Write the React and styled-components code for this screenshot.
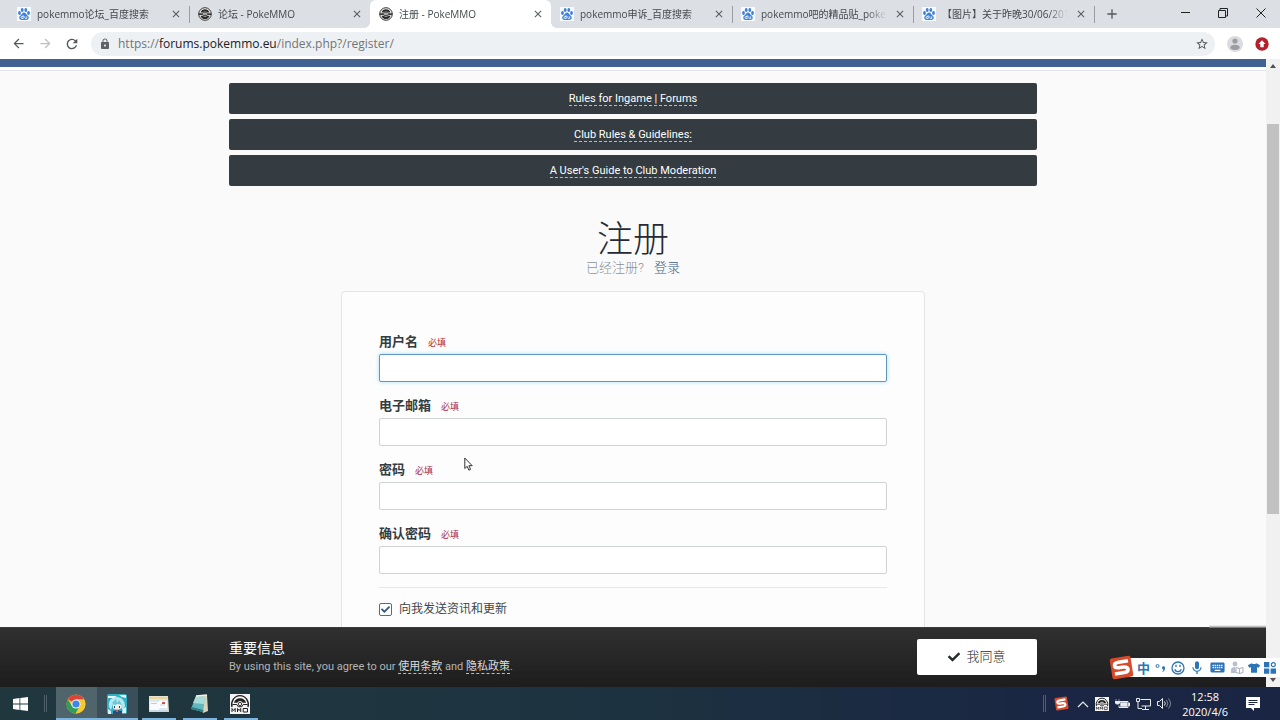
import React from 'react'
import styled, { createGlobalStyle, css } from 'styled-components'
import {
  MdAdd,
  MdArrowBack,
  MdArrowForward,
  MdClose,
  MdKeyboard,
  MdLock,
  MdMic,
  MdRefresh,
  MdStarBorder
} from 'react-icons/md'
import { FaCheck, FaTshirt } from 'react-icons/fa'

const uiFont = `'Open Sans', 'Noto Sans CJK SC', sans-serif`
const siteFont = `Roboto, 'Noto Sans CJK SC', sans-serif`

const GlobalStyle = createGlobalStyle`
  * {
    box-sizing: border-box;
  }

  body {
    margin: 0;
    overflow: hidden;
  }

  button {
    background: none;
    border: 0;
    font: inherit;
    margin: 0;
    padding: 0;
  }

  svg {
    display: block;
    flex: none;
  }
`

const Desktop = styled.div`
  display: flex;
  flex-direction: column;
  font-family: ${uiFont};
  height: 100vh;
  position: relative;
`

/* browser chrome */

const TabStrip = styled.div`
  align-items: stretch;
  background: #dce0e5;
  display: flex;
  height: 28px;
  padding-left: 8px;
`

const Tab = styled.div`
  align-items: center;
  color: #45494d;
  display: flex;
  flex: 0 1 181px;
  gap: 6px;
  min-width: 0;
  padding: 0 6px 0 9px;
  position: relative;

  ${props => props.$divider && css`
    &::after {
      background: #9a9ea3;
      content: '';
      height: 17px;
      position: absolute;
      right: -1px;
      top: 6px;
      width: 1px;
    }
  `}

  ${props => props.$active && css`
    background: #fff;
    border-radius: 6px 6px 0 0;

    &::before,
    &::after {
      bottom: 0;
      content: '';
      height: 6px;
      position: absolute;
      width: 6px;
    }

    &::before {
      background: radial-gradient(circle at 0 0, transparent 6px, #fff 6px);
      left: -6px;
    }

    &::after {
      background: radial-gradient(circle at 100% 0, transparent 6px, #fff 6px);
      right: -6px;
    }
  `}
`

const TabTitle = styled.span`
  flex: 1;
  font-size: 10px;
  line-height: 16px;
  mask-image: linear-gradient(to left, transparent, #000 20px);
  min-width: 0;
  overflow: hidden;
  white-space: nowrap;
`

const IconButton = styled.button`
  align-items: center;
  color: ${props => props.$color || '#55595d'};
  display: flex;
  flex: none;
  height: ${props => props.$size || 14}px;
  justify-content: center;
  width: ${props => props.$size || 14}px;
`

const NewTab = styled(IconButton)`
  align-self: center;
  margin-left: 9px;
`

const WindowControls = styled.div`
  display: flex;
  margin-left: auto;
`

const WindowButton = styled.button`
  align-items: center;
  color: #222;
  display: flex;
  height: 25px;
  justify-content: center;
  width: 38px;
`

const Toolbar = styled.div`
  align-items: center;
  background: #fff;
  display: flex;
  gap: 11px;
  height: 31px;
  padding: 0 10px;
`

const AddressBar = styled.div`
  align-items: center;
  background: #eef1f3;
  border-radius: 12px;
  color: #5f6368;
  display: flex;
  flex: 1;
  gap: 7px;
  height: 24px;
  padding: 0 6px 0 8px;
`

const Address = styled.input`
  background: none;
  border: 0;
  color: transparent;
  flex: 1;
  font: inherit;
  grid-area: 1 / 1;
  outline: 0;
  padding: 0;
  width: 100%;
`

const AddressText = styled.label`
  display: grid;
  flex: 1;
  font-size: 12px;
  line-height: 18px;
`

const AddressHost = styled.span`
  color: #70757a;
  grid-area: 1 / 1;
  pointer-events: none;

  b {
    color: #202124;
    font-weight: 400;
  }
`

const ToolbarEnd = styled.div`
  align-items: center;
  display: flex;
  gap: 10px;
`

const Viewport = styled.div`
  display: flex;
  flex: 1;
  min-height: 0;
`

const Scrollbar = styled.div`
  align-items: stretch;
  background: #f1f1f1;
  display: flex;
  flex: none;
  flex-direction: column;
  padding: 0 1px;
  width: 14px;
`

const ScrollArrow = styled.div`
  align-items: center;
  display: flex;
  height: 14px;
  justify-content: center;
`

const ScrollSpace = styled.div`
  background: ${props => props.$thumb ? '#c1c1c1' : 'none'};
  flex: ${props => props.$size};
`

/* forum page */

const Page = styled.div`
  background: #fafafa;
  color: #272a34;
  display: flex;
  flex: 1;
  flex-direction: column;
  font-family: ${siteFont};
  min-width: 0;
`

const HeaderEdge = styled.header`
  background: #fff;
  border-bottom: 1px solid #e3e3e5;
  border-top: 8px solid #3f6292;
  flex: none;
  height: 12px;
`

const Content = styled.main`
  flex: 1;
  min-height: 0;
  overflow: hidden;
  padding: 12px 20px 0;
`

const Notices = styled.nav`
  display: flex;
  flex-direction: column;
  gap: 5px;
  margin: 0 auto;
  max-width: 808px;
`

const Notice = styled.div`
  background: #353c41;
  border-radius: 2px;
  font-size: 11px;
  line-height: 13px;
  padding: 9px;
  text-align: center;
`

const DashedLink = styled.a`
  border-bottom: 1px dashed #b9bcbe;
  color: #fff;
  text-decoration: none;
`

const TitleBlock = styled.div`
  margin-top: 34px;
  text-align: center;
`

const Title = styled.h1`
  font-size: 36px;
  font-weight: 300;
  line-height: 40px;
  margin: 0;
`

const SubTitle = styled.p`
  color: #8c9299;
  font-size: 13px;
  font-weight: 300;
  line-height: 16px;
  margin: 0;

  a {
    color: #3d5f8c;
    margin-left: 7px;
    text-decoration: none;
  }
`

const Card = styled.form`
  background: #fdfdfd;
  border: 1px solid #e4e5e7;
  border-radius: 4px;
  margin: 15px auto 0;
  max-width: 584px;
  padding: 39px 37px;
`

const Field = styled.div`
  margin-bottom: 13px;
`

const FieldLabel = styled.label`
  align-items: baseline;
  color: #353c41;
  display: flex;
  font-size: 13px;
  font-weight: 700;
  gap: 10px;
  line-height: 22px;
  margin-bottom: 1px;
`

const Required = styled.span`
  color: #b02a37;
  font-size: 9px;
  font-weight: 400;
  line-height: 16px;
`

const TextInput = styled.input`
  background: #fff;
  border: 1px solid ${props => props.$active ? '#5f97bd' : '#cfd1d3'};
  border-radius: 2px;
  box-shadow: ${props => props.$active ? '0 0 4px #a5dcf5' : 'none'};
  display: block;
  font: 12px/16px ${siteFont};
  height: 28px;
  outline: 0;
  padding: 5px 8px;
  width: 100%;
`

const Newsletter = styled.label`
  align-items: center;
  border-top: 1px solid #e8e8ea;
  color: #40454a;
  display: flex;
  font-size: 12px;
  gap: 7px;
  line-height: 18px;
  padding-top: 12px;
`

const Tick = styled.span`
  display: grid;
  height: 13px;
  place-items: center;
  width: 13px;

  input {
    appearance: none;
    background: #fff;
    border: 1px solid #4a6f96;
    border-radius: 2px;
    grid-area: 1 / 1;
    height: 13px;
    margin: 0;
    width: 13px;
  }

  svg {
    color: #2f5583;
    grid-area: 1 / 1;
    pointer-events: none;
    z-index: 1;
  }
`

const Terms = styled.footer`
  background: linear-gradient(#303030, #1d1d1d);
  border-top: 1px solid #3a3a3a;
  flex: none;
  padding: 11px 20px 12px;
  position: relative;

  &::before {
    background: linear-gradient(transparent, #888);
    content: '';
    height: 3px;
    position: absolute;
    right: 0;
    top: -3px;
    width: 57px;
  }
`

const TermsInner = styled.div`
  align-items: center;
  display: flex;
  justify-content: space-between;
  margin: 0 auto;
  max-width: 808px;
`

const TermsTitle = styled.h2`
  color: #fff;
  font-size: 14px;
  font-weight: 400;
  line-height: 19px;
  margin: 0;
`

const TermsText = styled.p`
  color: #b4b4b4;
  font-size: 11px;
  line-height: 17px;
  margin: 0;

  a {
    color: #dcdcdc;
  }
`

const AgreeButton = styled.button`
  align-items: center;
  background: #fff;
  border-radius: 2px;
  color: #272a2d;
  display: flex;
  font-size: 13px;
  font-weight: 300;
  gap: 6px;
  height: 36px;
  justify-content: center;
  line-height: 16px;
  width: 120px;
`

/* windows desktop */

const Taskbar = styled.div`
  align-items: stretch;
  background: linear-gradient(to right, #21373e, #1d3340 45%, #1a2743 80%, #1a2544);
  display: flex;
  flex: none;
  height: 33px;
`

const StartButton = styled.button`
  align-items: center;
  display: flex;
  justify-content: center;
  width: 40px;
`

const Grip = styled.span`
  align-self: center;
  border: solid #4d5f68;
  border-width: 0 1px;
  height: 17px;
  margin: 0 ${props => props.$gap}px 0 4px;
  width: 3px;
`

const Apps = styled.div`
  display: flex;
`

const AppButton = styled.button`
  align-items: center;
  background: ${props => props.$fill || 'none'};
  border-bottom: 2px solid ${props => props.$fill ? '#7db4e0' : 'transparent'};
  display: flex;
  justify-content: center;
  padding: 2px 1px 0 0;
  position: relative;
  width: 41px;

  &::after {
    background: #7db4e0;
    bottom: -2px;
    content: '';
    height: 2px;
    left: 4px;
    position: absolute;
    right: 3px;
  }
`

const Tray = styled.div`
  align-items: center;
  color: #e8ecef;
  display: flex;
  gap: 6px;
  margin-left: auto;
  padding-right: 20px;
`

const Clock = styled.time`
  color: #fff;
  font-size: 11px;
  line-height: 15px;
  margin: 0 12px 0 4px;
  text-align: center;
`

const ImeBar = styled.div`
  align-items: center;
  background: #fff;
  bottom: 43px;
  color: #2c74b8;
  display: flex;
  height: 19px;
  justify-content: space-between;
  padding: 0 4px 0 13px;
  position: absolute;
  right: 0;
  width: 156px;
`

const ImeLogo = styled.div`
  left: -15px;
  position: absolute;
  top: -3px;
`

const ImeMode = styled.span`
  font-size: 13px;
  font-weight: 700;
  line-height: 18px;
  width: 13px;
`

const Pointer = styled.div`
  left: 464px;
  pointer-events: none;
  position: absolute;
  top: 457px;
`

const BaiduIcon = () => (
  <svg width="14" height="14" viewBox="0 0 14 14">
    <rect width="14" height="14" fill="#f7fbff" />
    <g fill="#3d80d6">
      <ellipse cx="2.5" cy="6" rx="1.4" ry="1.9" />
      <ellipse cx="5.2" cy="3" rx="1.4" ry="1.9" />
      <ellipse cx="8.8" cy="3" rx="1.4" ry="1.9" />
      <ellipse cx="11.5" cy="6" rx="1.4" ry="1.9" />
      <path d="M7 5.600c1.600 0 2 1.500 3 2.500 1 .9 1.900 1.700 1.700 3-.2 1.600-1.400 2-2.700 1.900-1.400-.1-2.600-.1-4 0-1.300.1-2.500-.3-2.700-1.900-.2-1.300.7-2.100 1.700-3 1-1 1.400-2.500 3-2.500z" />
    </g>
    <path d="M6.200 8.200v3.300H5a1 1 0 1 1 0-2h1.200M7.800 9.300v1.500c0 .5.300.8.700.8h1.200V9.300" fill="none" stroke="#fff" strokeWidth=".8" />
  </svg>
)

const PokeIcon = () => (
  <svg width="14" height="14" viewBox="0 0 14 14">
    <circle cx="7" cy="7" r="6.300" fill="#f2f2f2" stroke="#333" strokeWidth="1" />
    <path d="M2.500 5.500a4.700 4.700 0 0 1 9 0H9L8.200 4.800H5.800L5 5.500zM2.500 8.700a4.700 4.700 0 0 0 9 0H9l-.8.700H5.800L5 8.700z" fill="#2c2c2c" />
    <path d="M.8 6.200h3.600l1-.9h3.200l1 .9h3.600v1.800H9.600l-1 .9H5.400l-1-.9H.8z" fill="#383838" />
    <path d="M5.200 6.500h3.600v1.200H5.200z" fill="none" stroke="#e4e4e4" strokeWidth=".7" />
  </svg>
)

const PokeTile = ({ size }) => (
  <svg width={ size } height={ size } viewBox="0 0 20 20">
    <rect width="20" height="20" fill="#f4f4f4" />
    <path d="M2 13a8.300 9 0 1 1 16 0" fill="none" stroke="#222" strokeWidth="1.400" />
    <path d="M4 8.800a6.200 6.200 0 0 1 12 0h-3.300a2.900 2.900 0 0 0-5.400 0z" fill="#222" />
    <circle cx="10" cy="10" r="1.700" fill="none" stroke="#222" strokeWidth=".9" />
    <path d="M2.500 10.500h4.300l1.400 2.200h3.600l1.400-2.200h4.300" fill="none" stroke="#222" />
    <path d="M2 18v-3.500l1.600 2 1.600-2V18M7.500 18v-3.500l1.600 2 1.600-2V18M13.200 14.500h4.300V18h-4.300z" fill="none" stroke="#222" strokeWidth="1" />
  </svg>
)

const ChromeIcon = () => (
  <svg width="20" height="20" viewBox="0 0 20 20">
    <circle cx="10" cy="10" r="9.500" fill="#f6c834" />
    <path d="M10 10 1.800 5.200A9.500 9.500 0 0 1 18.200 5.500H10z" fill="#dc4437" />
    <path d="M1.800 5.200A9.500 9.500 0 0 0 9.600 19.500L14 12 10 10 6 12.200z" fill="#2f9e57" />
    <path d="M10 5.500h8.200a9.500 9.500 0 0 1-8.600 14L14 12z" fill="#f6c834" />
    <circle cx="10" cy="10" r="4.600" fill="#f5f5f5" />
    <circle cx="10" cy="10" r="3.600" fill="#4285e8" />
  </svg>
)

const CharacterIcon = () => (
  <svg width="20" height="20" viewBox="0 0 20 20">
    <rect width="20" height="20" rx="2" fill="#33afc5" />
    <path d="M2 13C1 6 5 3 10 3s8 4 8 9l-2 5-3-6-7-1-2 6z" fill="#b2e9ef" />
    <path d="M1 2h9l-3 2H1zM12 1h7v3l-4-1z" fill="#e9fafa" />
    <path d="M6 11c2-2 6-2 8 0v3c-1 2-7 2-8 0z" fill="#f6eeee" />
    <path d="M5 9l4-4 1 4 2-3 3 5-4-1-3 1z" fill="#69c8d7" />
    <path d="M7 12h1v2H7zM12 12h1v2h-1z" fill="#24475f" />
    <path d="M6 17l4-1 5 1v3H6z" fill="#294c79" />
    <path d="M1 15l3 2v3H1zM16 15l3-2v6h-4z" fill="#d9f5f7" />
    <path d="M9 16h2v2H9z" fill="#d0536f" />
  </svg>
)

const MailIcon = () => (
  <svg width="21" height="18" viewBox="0 0 21 18">
    <path d="M1 1h19l1 16H1z" fill="#e9e3cb" />
    <path d="M1 3h19v13H1z" fill="#dce9f4" />
    <path d="M1 2h19v2H1z" fill="#ecd59a" />
    <path d="M2 7h9v8H2z" fill="#f8fafc" />
    <path d="M11 6h8v7h-8z" fill="#fff" />
    <path d="M14 7h3v2h-3z" fill="#d9503d" />
    <path d="M12 10h5M3 8.500h6" stroke="#a9c3d8" strokeWidth=".8" />
    <path d="M1 16h20" stroke="#b9c9d8" />
  </svg>
)

const NotepadIcon = () => (
  <svg width="19" height="20" viewBox="0 0 19 20">
    <path d="M6 2 17 1l1 16-5 2z" fill="#d9d5bd" />
    <path d="M6 2l9 1-2 15-12-3z" fill="#61b7bd" />
    <path d="M6 2l9 1-1 7-11-1z" fill="#a5dcda" />
    <path d="M1 15l12 3 .5-2L2 13z" fill="#2f7f88" />
    <path d="M6 2l11-1" stroke="#f2f2ea" strokeWidth="1.500" />
  </svg>
)

const SogouIcon = ({ size }) => (
  <svg width={ size } height={ size } viewBox="0 0 25 25">
    <g transform="rotate(-9 12.500 12.500)">
      <rect x="2" y="2" width="21" height="21" rx="2" fill="#d94a2b" />
      <path d="M20 6.800h-9.500c-6 0-6 5.200-.5 5.500h4.500c5.500.3 5.500 5.500 0 5.500H5" fill="none" stroke="#fff" strokeWidth="3.600" />
    </g>
  </svg>
)

const WindowsIcon = () => (
  <svg width="15" height="14" viewBox="0 0 15 14" fill="#fff">
    <path d="M0 2l6.500-1v5.600H0zM7.300.9 15 0v6.600H7.300zM0 7.400h6.500V13L0 12zM7.300 7.400H15V14l-7.700-1z" />
  </svg>
)

const ProfileIcon = () => (
  <svg width="16" height="16" viewBox="0 0 16 16">
    <circle cx="8" cy="8" r="8" fill="#dadcdf" />
    <circle cx="8" cy="5" r="2.600" fill="#9b9da0" />
    <ellipse cx="8" cy="11.300" rx="4.600" ry="2.600" fill="#9b9da0" />
  </svg>
)

const UpdateIcon = () => (
  <svg width="14" height="14" viewBox="0 0 14 14">
    <circle cx="7" cy="7" r="6.700" fill="#b3202c" />
    <path d="M7 3.300 10.500 7H8.700v3.300H5.300V7H3.500z" fill="#fff" />
  </svg>
)

const ArrowGlyph = ({ down }) => (
  <svg width="6" height="4" viewBox="0 0 6 4">
    <path d={ down ? 'M0 0h6L3 4z' : 'M0 4h6L3 0z' } fill="#505050" />
  </svg>
)

const BatteryIcon = () => (
  <svg width="15" height="12" viewBox="0 0 15 12">
    <path d="M4.500 3.500h8.500v6h-9v-2" fill="none" stroke="currentColor" />
    <path d="M5.500 4.500H12v4H5.500zM13.500 5H15v3h-1.500zM1 1v2M4 1v2" fill="currentColor" stroke="currentColor" strokeWidth=".5" />
    <path d="M0 3h5v1.500a2 2 0 0 1-2 2H2a2 2 0 0 1-2-2z" fill="currentColor" />
  </svg>
)

const NetworkIcon = () => (
  <svg width="15" height="13" viewBox="0 0 15 13" fill="none" stroke="currentColor">
    <path d="M4.500 2.500h10v6.500h-9M9.500 9v3M6 12.500h7M.5 1.500h3v3h-3zM2 4.500v7h4" />
  </svg>
)

const SpeakerIcon = () => (
  <svg width="15" height="13" viewBox="0 0 15 13" fill="none" stroke="currentColor">
    <path d="M.5 4.500h2l3-3v10l-3-3h-2z" />
    <path d="M7.500 4.500q1.500 2 0 4" />
    <path d="M9.500 3q2.500 3.500 0 7M11.500 1.500q4 5 0 10" opacity=".5" />
  </svg>
)

const NoteIcon = () => (
  <svg width="14" height="14" viewBox="0 0 14 14">
    <path d="M0 0h14v11H8v3l-3-3H0z" fill="#fff" />
    <path d="M2.500 3.500h9M2.500 5.500h9M2.500 7.500h6" stroke="#1a2544" />
  </svg>
)

const PunctuationIcon = () => (
  <svg width="13" height="12" viewBox="0 0 13 12">
    <circle cx="3.500" cy="4" r="1.500" fill="none" stroke="currentColor" />
    <path d="M8 5.500a1.500 1.500 0 1 1 3 .5c0 2-.8 3.200-2.300 4l-.4-.7c.8-.5 1-1.200 1-1.900C8.500 7.300 8 6.500 8 5.500z" fill="currentColor" />
  </svg>
)

const SmileIcon = () => (
  <svg width="14" height="14" viewBox="0 0 14 14" fill="none" stroke="currentColor" strokeWidth="1.300">
    <circle cx="7" cy="7" r="6" />
    <path d="M5 3.800v2.200M9 3.800v2.200M3.800 8.200c1 3.200 5.400 3.200 6.400 0" />
  </svg>
)

const ReaderIcon = () => (
  <svg width="14" height="13" viewBox="0 0 14 13">
    <circle cx="5" cy="3" r="2.400" fill="#b9bdd0" />
    <path d="M1 12V9c0-2 1.500-3 4-3l1 6zM0 12h6" fill="#b9bdd0" />
    <path d="M6 6.500l3.500 1 3.500-1v5l-3.500 1-3.500-1zM9.500 7.500v5" fill="#fff" stroke="#a9aec0" />
  </svg>
)

const GridIcon = () => (
  <svg width="12" height="12" viewBox="0 0 12 12" fill="currentColor">
    <path d="M0 0h5.300v5.300H0zM0 6.500h5.300v5.300H0zM6.600 6.500H12v5.300H6.600z" />
    <circle cx="9.300" cy="2.700" r="2" fill="none" stroke="currentColor" strokeWidth="1.200" />
  </svg>
)

const tabs = [
  { title: 'pokemmo论坛_百度搜索', icon: BaiduIcon, divider: true },
  { title: '论坛 - PokeMMO', icon: PokeIcon },
  { title: '注册 - PokeMMO', icon: PokeIcon, active: true },
  { title: 'pokemmo申诉_百度搜索', icon: BaiduIcon, divider: true },
  { title: 'pokemmo吧的精品贴_poke', icon: BaiduIcon, divider: true },
  { title: '【图片】关于昨晚30/06/201', icon: BaiduIcon, divider: true }
]

const notices = [
  'Rules for Ingame | Forums',
  'Club Rules & Guidelines:',
  'A User\'s Guide to Club Moderation'
]

const fields = [
  { id: 'username', label: '用户名', type: 'text', active: true },
  { id: 'email', label: '电子邮箱', type: 'email' },
  { id: 'password', label: '密码', type: 'password' },
  { id: 'password-confirm', label: '确认密码', type: 'password' }
]

const apps = [
  { name: 'Chrome', icon: <ChromeIcon />, fill: '#50646b' },
  { name: 'Game', icon: <CharacterIcon />, fill: '#3b4f5b' },
  { name: 'Mail', icon: <MailIcon /> },
  { name: 'Notepad', icon: <NotepadIcon /> },
  { name: 'PokeMMO', icon: <PokeTile size={ 20 } /> }
]

function Browser () {
  return (
    <>
      <TabStrip>
        {
          tabs.map(({ title, icon: Icon, active, divider }) => (
            <Tab key={ title } $active={ active } $divider={ divider }>
              <Icon />
              <TabTitle>{ title }</TabTitle>
              <IconButton aria-label="Close tab"><MdClose size={ 12 } /></IconButton>
            </Tab>
          ))
        }
        <NewTab aria-label="New tab" $size={ 18 }><MdAdd size={ 16 } /></NewTab>
        <WindowControls>
          <WindowButton aria-label="Minimize">
            <svg width="10" height="10"><path d="M1 4.500h9" stroke="currentColor" /></svg>
          </WindowButton>
          <WindowButton aria-label="Restore">
            <svg width="10" height="10" fill="none" stroke="currentColor">
              <path d="M.5 2.500h7v7h-7zM2 2V.5h7.500V8H8" />
            </svg>
          </WindowButton>
          <WindowButton aria-label="Close">
            <svg width="10" height="10"><path d="M.5.5l9 9M9.500.5l-9 9" stroke="currentColor" /></svg>
          </WindowButton>
        </WindowControls>
      </TabStrip>
      <Toolbar>
        <IconButton aria-label="Back" $size={ 16 }><MdArrowBack size={ 15 } /></IconButton>
        <IconButton aria-label="Forward" $size={ 16 } $color="#bcbfc2"><MdArrowForward size={ 15 } /></IconButton>
        <IconButton aria-label="Reload" $size={ 16 }><MdRefresh size={ 16 } /></IconButton>
        <AddressBar>
          <MdLock size={ 12 } />
          <AddressText>
            <Address aria-label="Address" type="url" />
            <AddressHost>https://<b>forums.pokemmo.eu</b>/index.php?/register/</AddressHost>
          </AddressText>
          <IconButton aria-label="Bookmark"><MdStarBorder size={ 14 } /></IconButton>
        </AddressBar>
        <ToolbarEnd>
          <IconButton aria-label="Profile" $size={ 18 }><ProfileIcon /></IconButton>
          <IconButton aria-label="Update" $size={ 16 }><UpdateIcon /></IconButton>
        </ToolbarEnd>
      </Toolbar>
    </>
  )
}

function Register () {
  return (
    <Page>
      <HeaderEdge />
      <Content>
        <Notices>
          {
            notices.map(text => (
              <Notice key={ text }><DashedLink href="#">{ text }</DashedLink></Notice>
            ))
          }
        </Notices>
        <TitleBlock>
          <Title>注册</Title>
          <SubTitle>已经注册? <a href="#">登录</a></SubTitle>
        </TitleBlock>
        <Card>
          {
            fields.map(field => (
              <Field key={ field.id }>
                <FieldLabel htmlFor={ field.id }>
                  { field.label }
                  <Required>必填</Required>
                </FieldLabel>
                <TextInput id={ field.id } type={ field.type } $active={ field.active } />
              </Field>
            ))
          }
          <Newsletter>
            <Tick>
              <input type="checkbox" defaultChecked />
              <FaCheck size={ 9 } />
            </Tick>
            向我发送资讯和更新
          </Newsletter>
        </Card>
      </Content>
      <Terms>
        <TermsInner>
          <div>
            <TermsTitle>重要信息</TermsTitle>
            <TermsText>
              By using this site, you agree to our <DashedLink href="#">使用条款</DashedLink> and <DashedLink href="#">隐私政策</DashedLink>.
            </TermsText>
          </div>
          <AgreeButton><FaCheck size={ 12 } />我同意</AgreeButton>
        </TermsInner>
      </Terms>
    </Page>
  )
}

function WindowsTaskbar () {
  return (
    <Taskbar>
      <StartButton aria-label="Start"><WindowsIcon /></StartButton>
      <Grip $gap={ 9 } />
      <Apps>
        {
          apps.map(app => (
            <AppButton key={ app.name } aria-label={ app.name } $fill={ app.fill }>{ app.icon }</AppButton>
          ))
        }
      </Apps>
      <Tray>
        <Grip $gap={ 2 } />
        <SogouIcon size={ 15 } />
        <svg width="14" height="8" viewBox="0 0 14 8" fill="none" stroke="currentColor" strokeWidth="1.200">
          <path d="M3 7l5-5 5 5" />
        </svg>
        <PokeTile size={ 14 } />
        <BatteryIcon />
        <NetworkIcon />
        <SpeakerIcon />
        <Clock>12:58<br />2020/4/6</Clock>
        <NoteIcon />
      </Tray>
    </Taskbar>
  )
}

function App () {
  return (
    <Desktop>
      <GlobalStyle />
      <Browser />
      <Viewport>
        <Register />
        <Scrollbar>
          <ScrollArrow><ArrowGlyph /></ScrollArrow>
          <ScrollSpace $size={ 51 } />
          <ScrollSpace $size={ 390 } $thumb />
          <ScrollSpace $size={ 159 } />
          <ScrollArrow><ArrowGlyph down /></ScrollArrow>
        </Scrollbar>
      </Viewport>
      <WindowsTaskbar />
      <ImeBar>
        <ImeLogo><SogouIcon size={ 25 } /></ImeLogo>
        <ImeMode>中</ImeMode>
        <PunctuationIcon />
        <SmileIcon />
        <MdMic size={ 16 } />
        <MdKeyboard size={ 17 } />
        <ReaderIcon />
        <FaTshirt size={ 12 } />
        <GridIcon />
      </ImeBar>
      <Pointer>
        <svg width="10" height="15" viewBox="0 0 10 15">
          <path d="M.8 1v10.500l2.400-2.200 1.700 3.900 1.700-.8-1.700-3.700h3.300z" fill="#fff" stroke="#333" />
        </svg>
      </Pointer>
    </Desktop>
  )
}

export default App
